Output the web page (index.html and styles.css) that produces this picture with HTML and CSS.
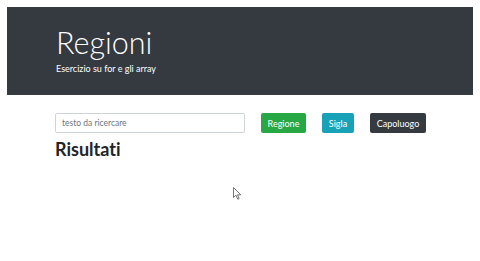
FILE: index.html
```html
<!DOCTYPE html>
<html lang="it">
<head>
<meta charset="utf-8">
<title>Regioni</title>
<link rel="stylesheet" href="styles.css">
</head>
<body>
<div class="page">
  <header class="jumbo">
    <h1 class="title">Regioni</h1>
    <p class="lead">Esercizio su for e gli array</p>
  </header>
  <main class="content">
    <div class="toolbar">
      <input class="search" type="text" placeholder="testo da ricercare">
      <button class="btn btn-green">Regione</button>
      <button class="btn btn-cyan">Sigla</button>
      <button class="btn btn-dark">Capoluogo</button>
    </div>
    <h2 class="results">Risultati</h2>
  </main>
  <svg class="cursor" width="9" height="13" viewBox="0 0 9 13">
    <path d="M0.5 0.5 L0.5 10.5 L3 8.2 L4.8 12.2 L6.2 11.6 L4.5 7.8 L7.8 7.8 Z" fill="#fff" stroke="#555" stroke-width="0.8"/>
  </svg>
</div>
</body>
</html>
```
FILE: styles.css
```css
html, body {
  margin: 0;
  padding: 0;
  background: #fff;
}
body {
  font-family: Lato, "Open Sans", sans-serif;
  color: #212529;
  font-variant-ligatures: none;
}
.page {
  position: relative;
  width: 480px;
  height: 261px;
  padding-top: 7px;
  box-sizing: border-box;
}
.jumbo {
  margin: 0 7px 0 7px;
  height: 88px;
  background: #343a40;
  color: #fff;
  padding: 18px 0 0 49px;
  box-sizing: border-box;
}
.title {
  margin: 0;
  font-weight: 300;
  font-size: 30.5px;
  line-height: 34px;
}
.lead {
  margin: 4px 0 0 0;
  font-size: 9px;
  line-height: 12px;
  font-weight: 400;
}
.content {
  padding: 18px 0 0 55px;
}
.toolbar {
  display: flex;
  align-items: center;
  gap: 16px;
}
.search {
  width: 190px;
  height: 20px;
  box-sizing: border-box;
  border: 1px solid #ced4da;
  border-radius: 2px;
  padding: 0 6px;
  font-family: inherit;
  font-size: 8.5px;
  color: #495057;
  outline: none;
}
.search::placeholder {
  color: #6c757d;
}
.btn {
  height: 20px;
  border: none;
  border-radius: 2px;
  color: #fff;
  font-family: inherit;
  font-size: 9px;
  padding: 0;
  cursor: pointer;
}
.btn-green { background: #28a745; width: 45px; }
.btn-cyan { background: #17a2b8; width: 32px; }
.btn-dark { background: #343a40; width: 56px; }
.results {
  margin: 6px 0 0 0;
  font-size: 18px;
  line-height: 20px;
  font-weight: 700;
}
.cursor {
  position: absolute;
  left: 233px;
  top: 187px;
}
```
